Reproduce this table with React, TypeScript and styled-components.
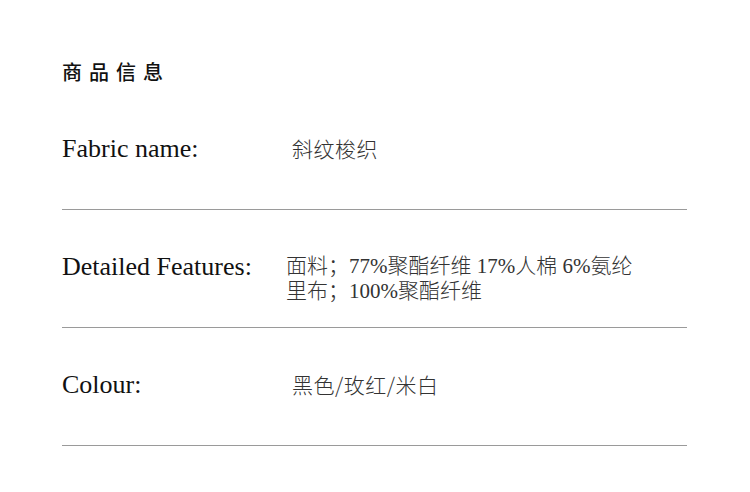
import React from 'react';
import styled, { createGlobalStyle } from 'styled-components';

const GlobalStyle = createGlobalStyle`
  html, body {
    margin: 0;
    padding: 0;
    background: #fff;
  }
`;

const Page = styled.div`
  width: 750px;
  height: 492px;
  box-sizing: border-box;
  padding: 58px 63px 0 62px;
  background: #fff;
`;

const Title = styled.h2`
  margin: 0;
  height: 34px;
  font-family: "Noto Sans CJK SC", sans-serif;
  font-size: 20px;
  font-weight: 500;
  line-height: 28px;
  letter-spacing: 7px;
  color: #111;
`;

const Row = styled.div`
  display: flex;
  align-items: flex-start;
  height: 117px;
  border-bottom: 1px solid #9a9a9a;
`;

const Label = styled.div`
  width: 224px;
  flex-shrink: 0;
  margin-top: 44px;
  font-family: "Liberation Serif", "Noto Sans CJK SC", serif;
  font-size: 26px;
  line-height: 26px;
  color: #111;
`;

const Value = styled.div<{ $indent: number; $serifLatin?: boolean }>`
  margin-top: 44px;
  padding-left: ${({ $indent }) => $indent}px;
  font-family: ${({ $serifLatin }) =>
    $serifLatin
      ? '"Liberation Serif", "Noto Sans CJK SC", serif'
      : '"Noto Sans CJK SC", sans-serif'};
  font-size: 21px;
  font-weight: 300;
  line-height: 25px;
  letter-spacing: ${({ $serifLatin }) => ($serifLatin ? '0' : '0.5px')};
  color: #333;
`;

const rows = [
  { label: 'Fabric name:', lines: ['斜纹梭织'], indent: 6, serif: false },
  {
    label: 'Detailed Features:',
    lines: ['面料；77%聚酯纤维 17%人棉 6%氨纶', '里布；100%聚酯纤维'],
    indent: 0,
    serif: true,
  },
  { label: 'Colour:', lines: ['黑色/玫红/米白'], indent: 6, serif: false },
];

const App = () => (
  <>
    <GlobalStyle />
    <Page>
      <Title>商品信息</Title>
      {rows.map((row) => (
        <Row key={row.label}>
          <Label>{row.label}</Label>
          <Value $indent={row.indent} $serifLatin={row.serif}>
            {row.lines.map((line) => (
              <div key={line}>{line}</div>
            ))}
          </Value>
        </Row>
      ))}
    </Page>
  </>
);

export default App;
